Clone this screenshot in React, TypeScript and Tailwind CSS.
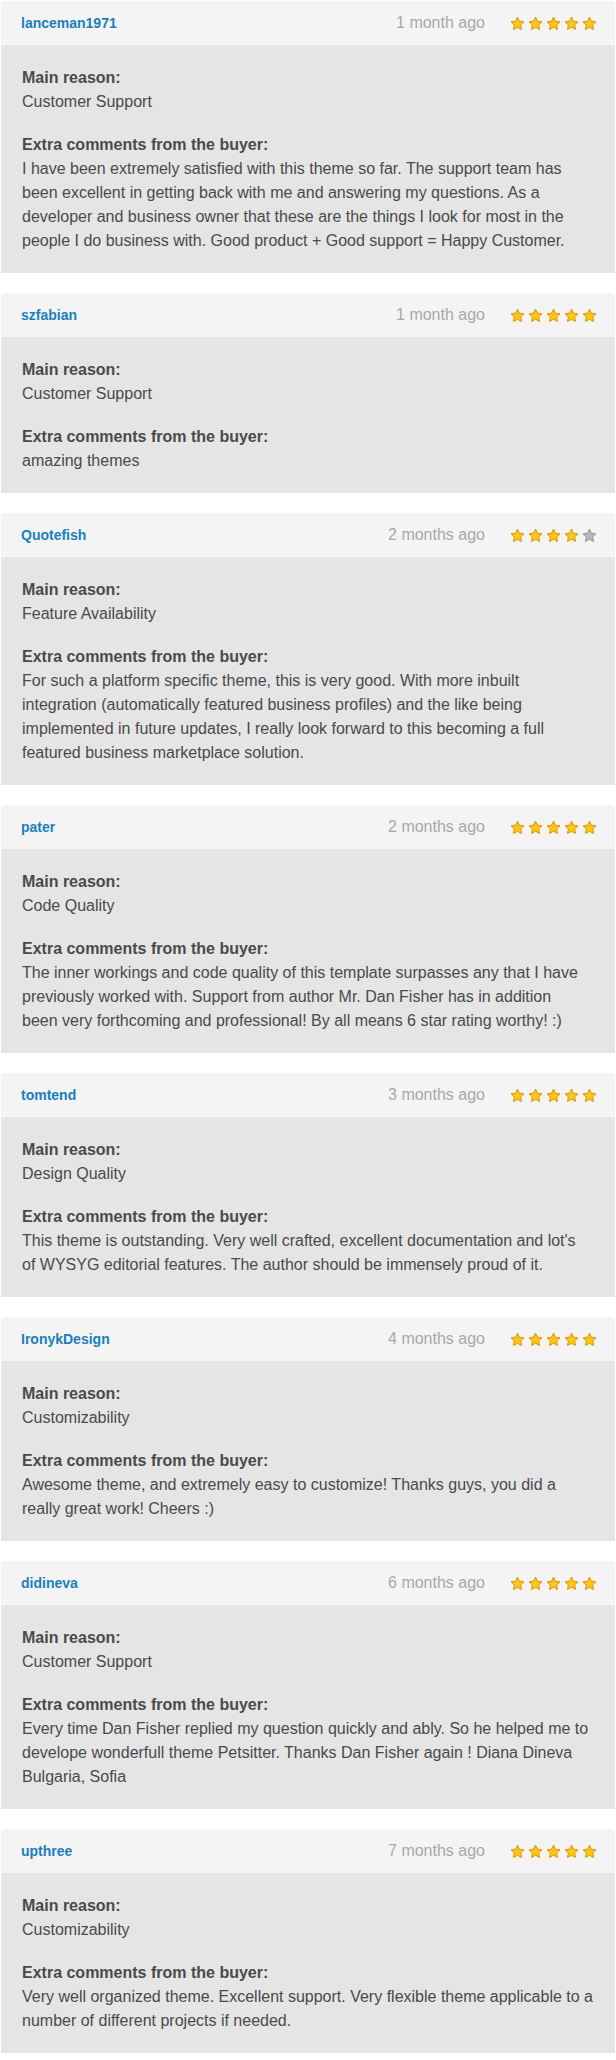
type Review = {
  user: string;
  when: string;
  rating: number;
  reason: string;
  comment: string;
};

const reviews: Review[] = [
  {
    user: "lanceman1971",
    when: "1 month ago",
    rating: 5,
    reason: "Customer Support",
    comment:
      "I have been extremely satisfied with this theme so far. The support team has been excellent in getting back with me and answering my questions. As a developer and business owner that these are the things I look for most in the people I do business with. Good product + Good support = Happy Customer.",
  },
  {
    user: "szfabian",
    when: "1 month ago",
    rating: 5,
    reason: "Customer Support",
    comment: "amazing themes",
  },
  {
    user: "Quotefish",
    when: "2 months ago",
    rating: 4,
    reason: "Feature Availability",
    comment:
      "For such a platform specific theme, this is very good. With more inbuilt integration (automatically featured business profiles) and the like being implemented in future updates, I really look forward to this becoming a full featured business marketplace solution.",
  },
  {
    user: "pater",
    when: "2 months ago",
    rating: 5,
    reason: "Code Quality",
    comment:
      "The inner workings and code quality of this template surpasses any that I have previously worked with. Support from author Mr. Dan Fisher has in addition been\u00a0very forthcoming and professional! By all means 6 star rating worthy! :)",
  },
  {
    user: "tomtend",
    when: "3 months ago",
    rating: 5,
    reason: "Design Quality",
    comment:
      "This theme is outstanding. Very well crafted, excellent documentation and lot's of\u00a0WYSYG editorial features. The author should be immensely proud of it.",
  },
  {
    user: "IronykDesign",
    when: "4 months ago",
    rating: 5,
    reason: "Customizability",
    comment:
      "Awesome theme, and extremely easy to customize! Thanks guys, you did a really great work! Cheers :)",
  },
  {
    user: "didineva",
    when: "6 months ago",
    rating: 5,
    reason: "Customer Support",
    comment:
      "Every time Dan Fisher replied my question quickly and ably. So he helped me to develope wonderfull theme Petsitter. Thanks Dan Fisher again ! Diana Dineva Bulgaria, Sofia",
  },
  {
    user: "upthree",
    when: "7 months ago",
    rating: 5,
    reason: "Customizability",
    comment:
      "Very well organized theme. Excellent support. Very flexible theme applicable to a number of different projects if needed.",
  },
];

function Star({ on }: { on: boolean }) {
  return (
    <svg width="15" height="15" viewBox="0 0 24 24">
      <path
        d="M12 1.8l3.1 6.6 7.2.9-5.3 5 1.4 7.2L12 18l-6.4 3.5L7 14.3l-5.3-5 7.2-.9z"
        fill={on ? "#ffc61a" : "#b8b8b8"}
        stroke={on ? "#dc9400" : "#959595"}
        strokeWidth="1.6"
        strokeLinejoin="round"
      />
    </svg>
  );
}

function Card({ r }: { r: Review }) {
  return (
    <div className="mx-[1px]">
      <div className="flex h-[44px] items-center rounded-t-[4px] bg-[#f4f4f4] pl-5 pr-[18px]">
        <span className="text-[14px] font-bold text-[#1a7fbc]">{r.user}</span>
        <span className="ml-auto text-[16px] text-[#a8a8a8]">{r.when}</span>
        <div className="ml-[25px] flex gap-[3px]">
          {[1, 2, 3, 4, 5].map((i) => (
            <Star key={i} on={i <= r.rating} />
          ))}
        </div>
      </div>
      <div className="bg-[#e5e5e5] px-[21px] pb-5 pt-[21px] text-[16px] leading-6 text-[#4a4a4a]">
        <p className="font-bold">Main reason:</p>
        <p>{r.reason}</p>
        <p className="mt-[19px] font-bold">Extra comments from the buyer:</p>
        <p>{r.comment}</p>
      </div>
    </div>
  );
}

export default function App() {
  return (
    <div className="flex w-[616px] flex-col gap-5 bg-white pt-[1px] font-['Liberation_Sans',Arial,sans-serif]">
      {reviews.map((r) => (
        <Card key={r.user} r={r} />
      ))}
    </div>
  );
}
